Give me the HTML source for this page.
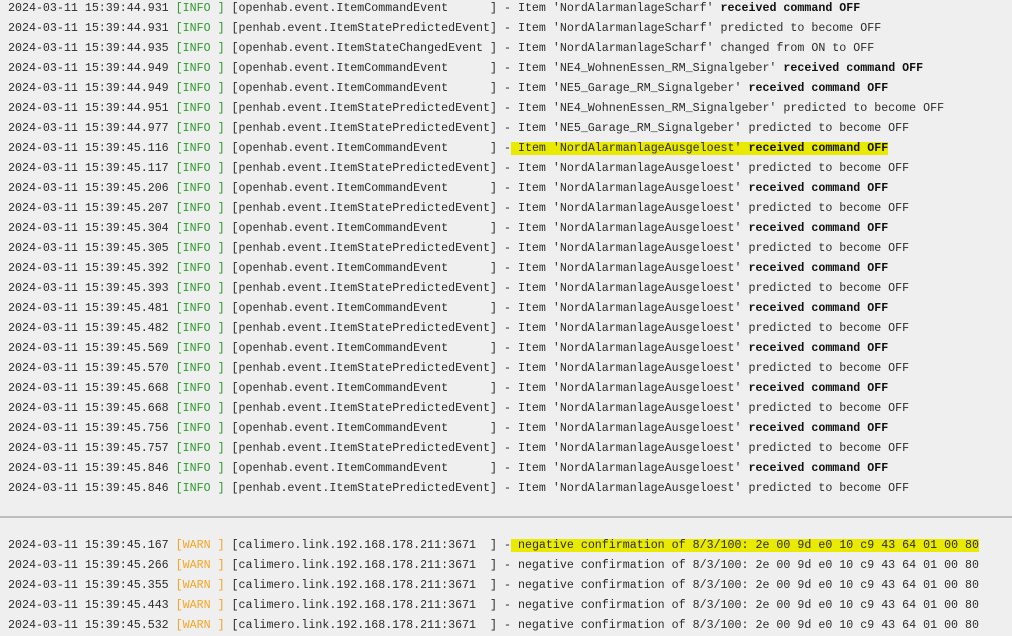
<!DOCTYPE html>
<html><head><meta charset="utf-8"><style>
html,body{margin:0;padding:0;background:#efefef;width:1012px;height:635px;overflow:hidden}
pre{margin:0;padding:0 0 0 8px;font-family:"Liberation Mono",monospace;font-size:11.65px;line-height:20px;color:#2b2b2b}
.i{color:#2e9a2e}.w{color:#f5a524}
.h{background:#eaea00}
b{font-weight:bold;color:#111}
#a{position:absolute;top:-1px;left:0}
#s{position:absolute;top:516px;left:0;width:1012px;height:2px;background:#bdbdbd}
#c{position:absolute;top:536px;left:0}
</style></head><body>
<pre id="a">2024-03-11 15:39:44.931 <span class="i">[INFO ]</span> [openhab.event.ItemCommandEvent      ] - Item 'NordAlarmanlageScharf' <b>received command OFF</b>
2024-03-11 15:39:44.931 <span class="i">[INFO ]</span> [penhab.event.ItemStatePredictedEvent] - Item 'NordAlarmanlageScharf' predicted to become OFF
2024-03-11 15:39:44.935 <span class="i">[INFO ]</span> [openhab.event.ItemStateChangedEvent ] - Item 'NordAlarmanlageScharf' changed from ON to OFF
2024-03-11 15:39:44.949 <span class="i">[INFO ]</span> [openhab.event.ItemCommandEvent      ] - Item 'NE4_WohnenEssen_RM_Signalgeber' <b>received command OFF</b>
2024-03-11 15:39:44.949 <span class="i">[INFO ]</span> [openhab.event.ItemCommandEvent      ] - Item 'NE5_Garage_RM_Signalgeber' <b>received command OFF</b>
2024-03-11 15:39:44.951 <span class="i">[INFO ]</span> [penhab.event.ItemStatePredictedEvent] - Item 'NE4_WohnenEssen_RM_Signalgeber' predicted to become OFF
2024-03-11 15:39:44.977 <span class="i">[INFO ]</span> [penhab.event.ItemStatePredictedEvent] - Item 'NE5_Garage_RM_Signalgeber' predicted to become OFF
2024-03-11 15:39:45.116 <span class="i">[INFO ]</span> [openhab.event.ItemCommandEvent      ] -<span class="h"> Item 'NordAlarmanlageAusgeloest' <b>received command OFF</b></span>
2024-03-11 15:39:45.117 <span class="i">[INFO ]</span> [penhab.event.ItemStatePredictedEvent] - Item 'NordAlarmanlageAusgeloest' predicted to become OFF
2024-03-11 15:39:45.206 <span class="i">[INFO ]</span> [openhab.event.ItemCommandEvent      ] - Item 'NordAlarmanlageAusgeloest' <b>received command OFF</b>
2024-03-11 15:39:45.207 <span class="i">[INFO ]</span> [penhab.event.ItemStatePredictedEvent] - Item 'NordAlarmanlageAusgeloest' predicted to become OFF
2024-03-11 15:39:45.304 <span class="i">[INFO ]</span> [openhab.event.ItemCommandEvent      ] - Item 'NordAlarmanlageAusgeloest' <b>received command OFF</b>
2024-03-11 15:39:45.305 <span class="i">[INFO ]</span> [penhab.event.ItemStatePredictedEvent] - Item 'NordAlarmanlageAusgeloest' predicted to become OFF
2024-03-11 15:39:45.392 <span class="i">[INFO ]</span> [openhab.event.ItemCommandEvent      ] - Item 'NordAlarmanlageAusgeloest' <b>received command OFF</b>
2024-03-11 15:39:45.393 <span class="i">[INFO ]</span> [penhab.event.ItemStatePredictedEvent] - Item 'NordAlarmanlageAusgeloest' predicted to become OFF
2024-03-11 15:39:45.481 <span class="i">[INFO ]</span> [openhab.event.ItemCommandEvent      ] - Item 'NordAlarmanlageAusgeloest' <b>received command OFF</b>
2024-03-11 15:39:45.482 <span class="i">[INFO ]</span> [penhab.event.ItemStatePredictedEvent] - Item 'NordAlarmanlageAusgeloest' predicted to become OFF
2024-03-11 15:39:45.569 <span class="i">[INFO ]</span> [openhab.event.ItemCommandEvent      ] - Item 'NordAlarmanlageAusgeloest' <b>received command OFF</b>
2024-03-11 15:39:45.570 <span class="i">[INFO ]</span> [penhab.event.ItemStatePredictedEvent] - Item 'NordAlarmanlageAusgeloest' predicted to become OFF
2024-03-11 15:39:45.668 <span class="i">[INFO ]</span> [openhab.event.ItemCommandEvent      ] - Item 'NordAlarmanlageAusgeloest' <b>received command OFF</b>
2024-03-11 15:39:45.668 <span class="i">[INFO ]</span> [penhab.event.ItemStatePredictedEvent] - Item 'NordAlarmanlageAusgeloest' predicted to become OFF
2024-03-11 15:39:45.756 <span class="i">[INFO ]</span> [openhab.event.ItemCommandEvent      ] - Item 'NordAlarmanlageAusgeloest' <b>received command OFF</b>
2024-03-11 15:39:45.757 <span class="i">[INFO ]</span> [penhab.event.ItemStatePredictedEvent] - Item 'NordAlarmanlageAusgeloest' predicted to become OFF
2024-03-11 15:39:45.846 <span class="i">[INFO ]</span> [openhab.event.ItemCommandEvent      ] - Item 'NordAlarmanlageAusgeloest' <b>received command OFF</b>
2024-03-11 15:39:45.846 <span class="i">[INFO ]</span> [penhab.event.ItemStatePredictedEvent] - Item 'NordAlarmanlageAusgeloest' predicted to become OFF</pre>
<div id="s"></div>
<pre id="c">2024-03-11 15:39:45.167 <span class="w">[WARN ]</span> [calimero.link.192.168.178.211:3671  ] -<span class="h"> negative confirmation of 8/3/100: 2e 00 9d e0 10 c9 43 64 01 00 80</span>
2024-03-11 15:39:45.266 <span class="w">[WARN ]</span> [calimero.link.192.168.178.211:3671  ] - negative confirmation of 8/3/100: 2e 00 9d e0 10 c9 43 64 01 00 80
2024-03-11 15:39:45.355 <span class="w">[WARN ]</span> [calimero.link.192.168.178.211:3671  ] - negative confirmation of 8/3/100: 2e 00 9d e0 10 c9 43 64 01 00 80
2024-03-11 15:39:45.443 <span class="w">[WARN ]</span> [calimero.link.192.168.178.211:3671  ] - negative confirmation of 8/3/100: 2e 00 9d e0 10 c9 43 64 01 00 80
2024-03-11 15:39:45.532 <span class="w">[WARN ]</span> [calimero.link.192.168.178.211:3671  ] - negative confirmation of 8/3/100: 2e 00 9d e0 10 c9 43 64 01 00 80</pre>
</body></html>
